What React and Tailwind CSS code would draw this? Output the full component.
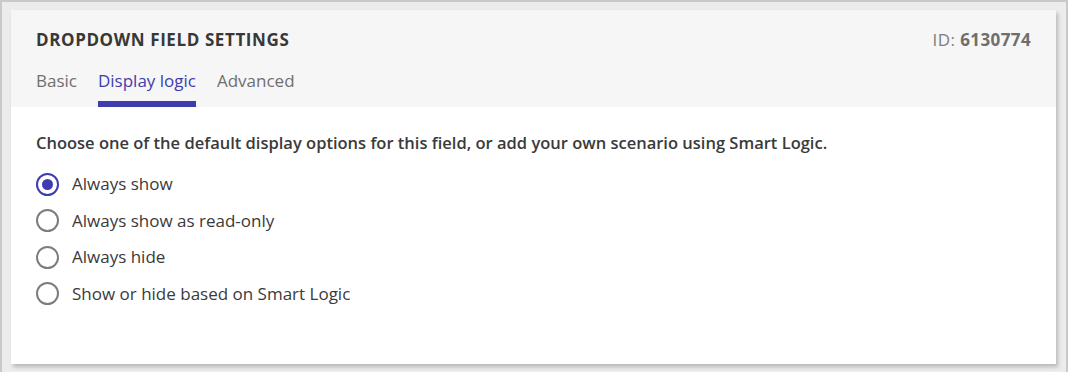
import React from "react";

const options = [
  "Always show",
  "Always show as read-only",
  "Always hide",
  "Show or hide based on Smart Logic",
];

const tabs = ["Basic", "Display logic", "Advanced"];

const Radio = ({ checked }) => (
  <span
    className={`flex h-[23px] w-[23px] shrink-0 items-center justify-center rounded-full border-2 ${
      checked ? "border-[#3d3db0]" : "border-[#7d7d7d]"
    }`}
  >
    {checked && <span className="h-[11px] w-[11px] rounded-full bg-[#3d3db0]" />}
  </span>
);

const App = () => {
  return (
    <div
      className="h-[372px] w-[1068px] border-2 border-b-0 border-[#c9c9c9] bg-[#ececec] pl-[9px] pr-[10px] pt-2"
      style={{ fontFamily: "'Open Sans', Lato, sans-serif" }}
    >
      <div className="h-[354px] bg-white shadow-[2px_3px_4px_rgba(0,0,0,0.22)]">
        {/* header */}
        <div className="bg-[#f6f6f6] px-[25px] pt-[18px]">
          <div className="flex items-center justify-between leading-[24px]">
            <h2 className="text-[17px] font-bold tracking-[0.6px] text-[#383838]">
              DROPDOWN FIELD SETTINGS
            </h2>
            <p className="text-[17px] tracking-[0.4px] text-[#7d7d7d]">
              ID: <span className="font-bold text-[#6e6e6e]">6130774</span>
            </p>
          </div>
          <div className="mt-[17px] flex gap-[21px]">
            {tabs.map((t) => (
              <button
                key={t}
                className={`border-b-[6px] pb-[8px] text-[17px] leading-[24px] ${
                  t === "Display logic"
                    ? "border-[#3d3db0] text-[#3d3db0]"
                    : "border-transparent text-[#6f6f6f]"
                }`}
              >
                {t}
              </button>
            ))}
          </div>
        </div>

        {/* body */}
        <div className="px-[25px] pt-[24px]">
          <p className="text-[16.5px] font-semibold leading-[24px] text-[#3a3a3a]">
            Choose one of the default display options for this field, or add your own scenario using Smart Logic.
          </p>
          <div className="mt-[17px] flex flex-col gap-[12.5px]">
            {options.map((o, i) => (
              <label
                key={o}
                className="flex h-[24px] items-center gap-[13px] text-[17px] leading-[24px] text-[#3a3a3a]"
              >
                <Radio checked={i === 0} />
                <span>{o}</span>
              </label>
            ))}
          </div>
        </div>
      </div>
    </div>
  );
};

export default App;
